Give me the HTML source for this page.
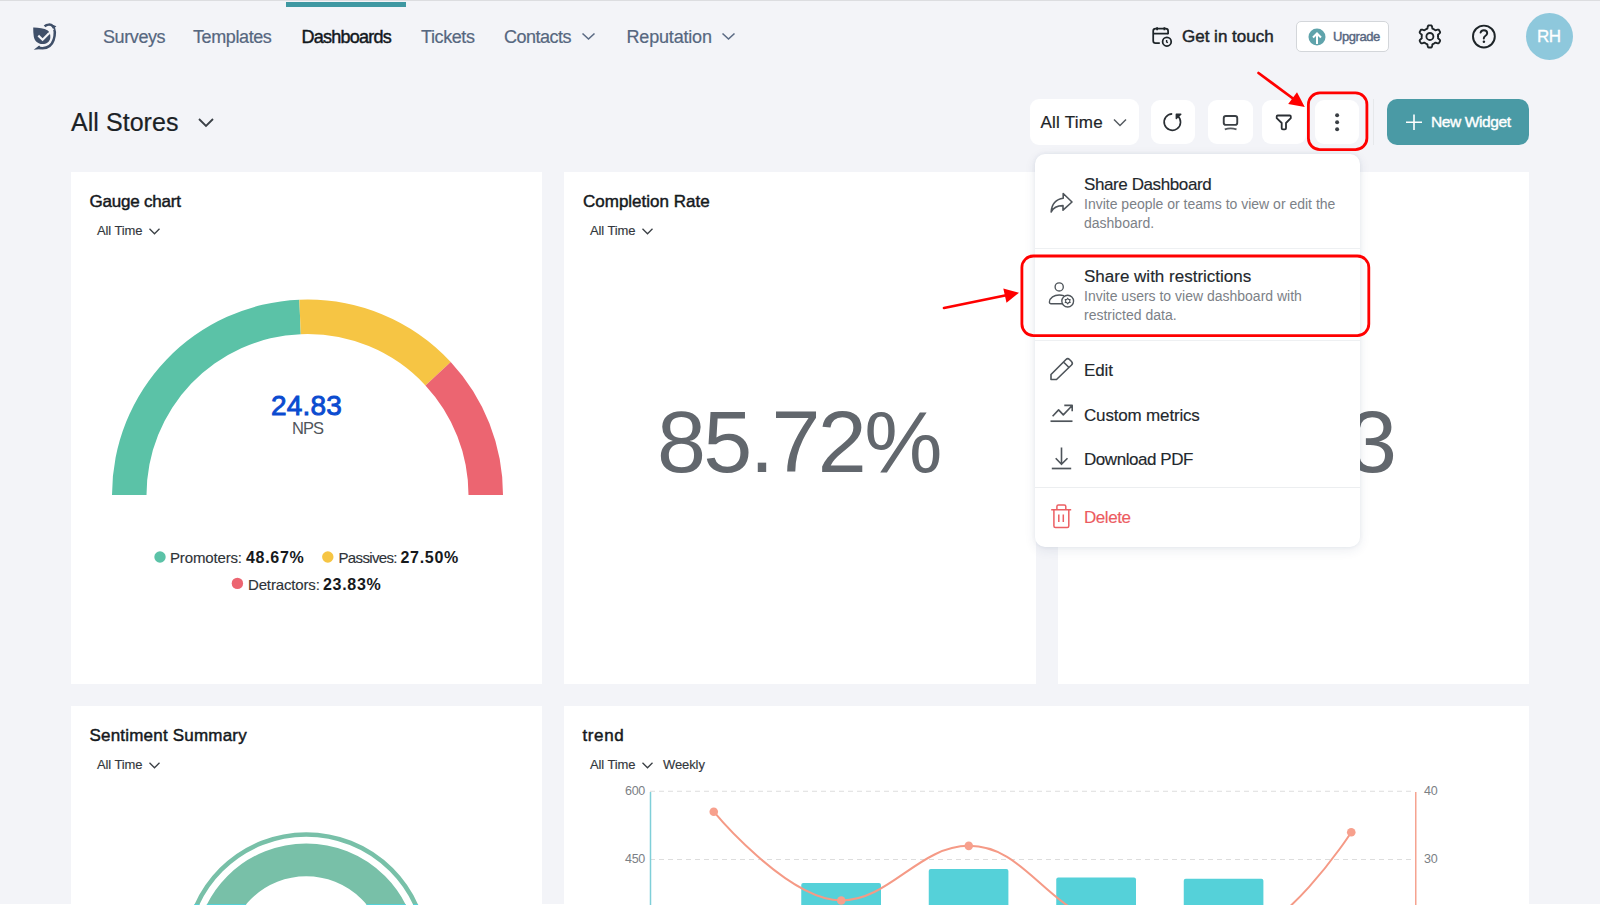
<!DOCTYPE html>
<html>
<head>
<meta charset="utf-8">
<style>
*{box-sizing:border-box;margin:0;padding:0}
html,body{width:1600px;height:905px;overflow:hidden}
body{background:#f3f4f8;font-family:"Liberation Sans",sans-serif;position:relative;color:#1d2428}
.a{position:absolute;white-space:nowrap}
.topline{position:absolute;left:0;top:0;width:1600px;height:1px;background:#dcdde0}
.nav{font-size:18px;line-height:20px;color:#56677f;letter-spacing:-0.4px;-webkit-text-stroke:0.2px #56677f}
.card{position:absolute;background:#fff}
.ctitle{font-size:17px;line-height:20px;font-weight:400;color:#15191d;letter-spacing:0px;-webkit-text-stroke:0.45px #15191d}
.ctime{font-size:13px;line-height:16px;color:#33383d;letter-spacing:-0.1px;-webkit-text-stroke:0.15px #33383d}
.btn{position:absolute;background:#fff;border-radius:9px}
.leg{font-size:15px;line-height:18px;color:#2e3338;-webkit-text-stroke:0.15px #2e3338}
.legv{font-size:16px;line-height:20px;font-weight:700;color:#16191c;letter-spacing:0.7px}
.mi{font-size:17px;line-height:20px;color:#23282d;letter-spacing:-0.45px;-webkit-text-stroke:0.15px #23282d}
.ms{font-size:14px;line-height:19px;color:#7c8187;letter-spacing:-0.2px}
</style>
</head>
<body>
<div class="topline"></div>
<div class="a" style="left:286px;top:2px;width:120px;height:5px;background:#3f98a2"></div>

<!-- logo -->
<svg class="a" style="left:0;top:0" width="70" height="60" viewBox="0 0 70 60">
  <path d="M33.2 27.6 C37.5 27.5 44 28.2 47.8 30.6 C50 32.4 50.6 35.2 50.3 38 C49.7 42 46.2 44.2 42.4 44.1 C38 44 34.6 41 33.8 36.8 C33.3 34 33.2 30.8 33.2 27.6 Z" fill="#3f4f69"/>
  <path d="M44.6 26.4 C46.8 24.2 50.8 23.9 52.8 26.3 C55 29 55.1 35 53.6 40 C51.9 45 47.5 48.1 42.5 48.2 C40.5 48.2 39 47.9 37.8 47.4" stroke="#3f4f69" stroke-width="2.5" fill="none"/>
  <path d="M39.2 45.6 L33.7 49.8 L42 48.9 Z" fill="#3f4f69"/>
  <path d="M52 24.6 L56.4 26.2 L53.6 28.8 Z" fill="#3f4f69"/>
  <path d="M38.3 35.6 L42.6 39.7 L49 33.3" stroke="#f3f4f8" stroke-width="2.2" fill="none"/>
  <path d="M48.2 34.1 L53.5 28.8" stroke="#f3f4f8" stroke-width="1.6" fill="none"/>
</svg>

<div class="a nav" style="left:103px;top:27px">Surveys</div>
<div class="a nav" style="left:193px;top:27px">Templates</div>
<div class="a nav" style="left:301.5px;top:27px;color:#12181d;letter-spacing:-0.75px;-webkit-text-stroke:0.45px #12181d">Dashboards</div>
<div class="a nav" style="left:421px;top:27px">Tickets</div>
<div class="a nav" style="left:504px;top:27px;letter-spacing:-0.5px">Contacts</div>
<svg class="a" style="left:581px;top:31px" width="15" height="10" viewBox="0 0 15 10"><path d="M1.5 2.5 L7.5 8 L13.5 2.5" stroke="#5b6b84" stroke-width="1.6" fill="none"/></svg>
<div class="a nav" style="left:626.5px;top:27px;letter-spacing:-0.18px">Reputation</div>
<svg class="a" style="left:721px;top:31px" width="15" height="10" viewBox="0 0 15 10"><path d="M1.5 2.5 L7.5 8 L13.5 2.5" stroke="#5b6b84" stroke-width="1.6" fill="none"/></svg>

<!-- right header -->
<svg class="a" style="left:1146px;top:22px" width="32" height="30" viewBox="1146 22 32 30">
  <path d="M1159.8 43.2 H1155.6 a2.4 2.4 0 0 1 -2.4 -2.4 V31 a2.4 2.4 0 0 1 2.4 -2.4 H1165.7 a2.4 2.4 0 0 1 2.4 2.4 V34.2" stroke="#1d2428" stroke-width="1.75" fill="none"/>
  <path d="M1153.2 33.6 H1168.1 M1157.1 27.3 V30.3 M1164.4 27.3 V30.3" stroke="#1d2428" stroke-width="1.75" fill="none"/>
  <circle cx="1166.9" cy="41.7" r="4.3" stroke="#1d2428" stroke-width="1.75" fill="none"/>
  <path d="M1166.6 40 V41.9 L1167.8 42.8" stroke="#1d2428" stroke-width="1.4" fill="none"/>
</svg>
<div class="a" style="left:1182px;top:27px;font-size:17px;line-height:20px;color:#1d2428;letter-spacing:0px;-webkit-text-stroke:0.45px #1d2428">Get in touch</div>
<div class="a" style="left:1296px;top:21px;width:93px;height:31px;border:1px solid #d3d6da;border-radius:5px;background:#fff"></div>
<svg class="a" style="left:1308px;top:28px" width="18" height="18" viewBox="0 0 18 18">
  <circle cx="9" cy="9" r="8.5" fill="#5fa3ab"/>
  <path d="M9 16 V6 M5 9.5 L9 5.5 L13 9.5" stroke="#fff" stroke-width="2" fill="none"/>
</svg>
<div class="a" style="left:1333px;top:29px;font-size:13px;line-height:16px;color:#56667f;letter-spacing:-0.45px;-webkit-text-stroke:0.4px #56667f">Upgrade</div>
<svg class="a" style="left:1410px;top:16px" width="40" height="42" viewBox="1410 16 40 42">
  <path d="M1429.90 25.35 L1430.19 25.35 L1430.48 25.37 L1430.77 25.38 L1431.06 25.41 L1431.34 25.49 L1431.60 25.71 L1431.82 26.07 L1432.00 26.56 L1432.14 27.13 L1432.24 27.70 L1432.34 28.20 L1432.47 28.55 L1432.64 28.72 L1432.84 28.79 L1433.04 28.87 L1433.24 28.96 L1433.43 29.05 L1433.62 29.14 L1433.81 29.24 L1434.00 29.35 L1434.18 29.46 L1434.37 29.57 L1434.54 29.69 L1434.72 29.82 L1434.89 29.94 L1435.06 30.08 L1435.23 30.21 L1435.46 30.28 L1435.82 30.21 L1436.30 30.05 L1436.85 29.85 L1437.41 29.69 L1437.93 29.59 L1438.35 29.60 L1438.67 29.72 L1438.88 29.93 L1439.05 30.16 L1439.21 30.40 L1439.36 30.65 L1439.51 30.90 L1439.65 31.15 L1439.79 31.41 L1439.92 31.67 L1440.04 31.94 L1440.11 32.22 L1440.06 32.55 L1439.85 32.93 L1439.51 33.33 L1439.09 33.73 L1438.65 34.11 L1438.27 34.44 L1438.02 34.72 L1437.96 34.96 L1438.00 35.17 L1438.03 35.38 L1438.06 35.59 L1438.07 35.81 L1438.09 36.02 L1438.10 36.24 L1438.10 36.45 L1438.10 36.66 L1438.09 36.88 L1438.07 37.09 L1438.06 37.31 L1438.03 37.52 L1438.00 37.73 L1437.96 37.94 L1438.02 38.18 L1438.27 38.46 L1438.65 38.79 L1439.09 39.17 L1439.51 39.57 L1439.85 39.97 L1440.06 40.35 L1440.11 40.68 L1440.04 40.96 L1439.92 41.23 L1439.79 41.49 L1439.65 41.75 L1439.51 42.00 L1439.36 42.25 L1439.21 42.50 L1439.05 42.74 L1438.88 42.97 L1438.67 43.18 L1438.35 43.30 L1437.93 43.31 L1437.41 43.21 L1436.85 43.05 L1436.30 42.85 L1435.82 42.69 L1435.46 42.62 L1435.23 42.69 L1435.06 42.82 L1434.89 42.96 L1434.72 43.08 L1434.54 43.21 L1434.37 43.33 L1434.18 43.44 L1434.00 43.55 L1433.81 43.66 L1433.62 43.76 L1433.43 43.85 L1433.24 43.94 L1433.04 44.03 L1432.84 44.11 L1432.64 44.18 L1432.47 44.35 L1432.34 44.70 L1432.24 45.20 L1432.14 45.77 L1432.00 46.34 L1431.82 46.83 L1431.60 47.19 L1431.34 47.41 L1431.06 47.49 L1430.77 47.52 L1430.48 47.53 L1430.19 47.55 L1429.90 47.55 L1429.61 47.55 L1429.32 47.53 L1429.03 47.52 L1428.74 47.49 L1428.46 47.41 L1428.20 47.19 L1427.98 46.83 L1427.80 46.34 L1427.66 45.77 L1427.56 45.20 L1427.46 44.70 L1427.33 44.35 L1427.16 44.18 L1426.96 44.11 L1426.76 44.03 L1426.56 43.94 L1426.37 43.85 L1426.18 43.76 L1425.99 43.66 L1425.80 43.55 L1425.62 43.44 L1425.43 43.33 L1425.26 43.21 L1425.08 43.08 L1424.91 42.96 L1424.74 42.82 L1424.57 42.69 L1424.34 42.62 L1423.98 42.69 L1423.50 42.85 L1422.95 43.05 L1422.39 43.21 L1421.87 43.31 L1421.45 43.30 L1421.13 43.18 L1420.92 42.97 L1420.75 42.74 L1420.59 42.50 L1420.44 42.25 L1420.29 42.00 L1420.15 41.75 L1420.01 41.49 L1419.88 41.23 L1419.76 40.96 L1419.69 40.68 L1419.74 40.35 L1419.95 39.97 L1420.29 39.57 L1420.71 39.17 L1421.15 38.79 L1421.53 38.46 L1421.78 38.18 L1421.84 37.94 L1421.80 37.73 L1421.77 37.52 L1421.74 37.31 L1421.73 37.09 L1421.71 36.88 L1421.70 36.66 L1421.70 36.45 L1421.70 36.24 L1421.71 36.02 L1421.73 35.81 L1421.74 35.59 L1421.77 35.38 L1421.80 35.17 L1421.84 34.96 L1421.78 34.72 L1421.53 34.44 L1421.15 34.11 L1420.71 33.73 L1420.29 33.33 L1419.95 32.93 L1419.74 32.55 L1419.69 32.22 L1419.76 31.94 L1419.88 31.67 L1420.01 31.41 L1420.15 31.15 L1420.29 30.90 L1420.44 30.65 L1420.59 30.40 L1420.75 30.16 L1420.92 29.93 L1421.13 29.72 L1421.45 29.60 L1421.87 29.59 L1422.39 29.69 L1422.95 29.85 L1423.50 30.05 L1423.98 30.21 L1424.34 30.28 L1424.57 30.21 L1424.74 30.08 L1424.91 29.94 L1425.08 29.82 L1425.26 29.69 L1425.43 29.57 L1425.62 29.46 L1425.80 29.35 L1425.99 29.24 L1426.18 29.14 L1426.37 29.05 L1426.56 28.96 L1426.76 28.87 L1426.96 28.79 L1427.16 28.72 L1427.33 28.55 L1427.46 28.20 L1427.56 27.70 L1427.66 27.13 L1427.80 26.56 L1427.98 26.07 L1428.20 25.71 L1428.46 25.49 L1428.74 25.41 L1429.03 25.38 L1429.32 25.37 L1429.61 25.35Z" stroke="#1d2428" stroke-width="1.9" fill="none" stroke-linejoin="round"/>
  <circle cx="1429.9" cy="36.45" r="3.5" stroke="#1d2428" stroke-width="1.85" fill="none"/>
</svg>
<svg class="a" style="left:1466px;top:20px" width="36" height="34" viewBox="1466 20 36 34">
  <circle cx="1483.9" cy="36.5" r="10.9" stroke="#1d2428" stroke-width="1.95" fill="none"/>
  <path d="M1480.6 32.6 C1481 30.9 1482.3 30.2 1483.8 30.2 C1485.8 30.2 1487.2 31.5 1487.2 33.2 C1487.2 34.8 1486.1 35.5 1485 36.2 C1484.2 36.7 1483.8 37.3 1483.8 38.6" stroke="#1d2428" stroke-width="1.95" fill="none" stroke-linecap="round"/>
  <circle cx="1483.9" cy="41.7" r="1.25" fill="#1d2428"/>
</svg>
<div class="a" style="left:1526px;top:13px;width:47px;height:47px;border-radius:50%;background:#8ec8dc"></div>
<div class="a" style="left:1537px;top:27px;font-size:17px;line-height:20px;color:#fff;letter-spacing:-0.6px;-webkit-text-stroke:0.3px #fff">RH</div>

<!-- title -->
<div class="a" style="left:71px;top:108.4px;font-size:25px;line-height:28px;color:#1b2226;letter-spacing:0.05px;-webkit-text-stroke:0.2px #1b2226">All Stores</div>
<svg class="a" style="left:197px;top:116px" width="18" height="12" viewBox="0 0 18 12"><path d="M2 3 L9 10 L16 3" stroke="#3a4046" stroke-width="1.8" fill="none"/></svg>

<!-- toolbar -->
<div class="btn" style="left:1030px;top:99px;width:109px;height:46px"></div>
<div class="a" style="left:1040.5px;top:113px;font-size:17px;line-height:20px;color:#1d2428;letter-spacing:0.25px;-webkit-text-stroke:0.2px #1d2428">All Time</div>
<svg class="a" style="left:1112px;top:117px" width="16" height="11" viewBox="0 0 16 11"><path d="M2 2.5 L8 8.5 L14 2.5" stroke="#555b61" stroke-width="1.5" fill="none"/></svg>
<div class="btn" style="left:1151px;top:100px;width:44px;height:44px"></div>
<svg class="a" style="left:1150px;top:100px" width="45" height="44" viewBox="1150 100 45 44">
  <path d="M1172.2 113.9 A8.2 8.2 0 1 0 1177.6 115.8" stroke="#2a2f34" stroke-width="1.65" fill="none"/>
  <path d="M1176.3 118.6 V114.2 H1180.8 Z" stroke="#2a2f34" stroke-width="1.4" fill="#2a2f34" stroke-linejoin="round"/>
</svg>
<div class="btn" style="left:1208px;top:100px;width:45px;height:44px"></div>
<svg class="a" style="left:1208px;top:100px" width="45" height="44" viewBox="1208 100 45 44">
  <rect x="1223.75" y="115.95" width="13.5" height="8.9" rx="2.2" stroke="#3a3f44" stroke-width="1.9" fill="none"/>
  <path d="M1224.8 129.4 C1228.5 128 1232.5 128 1236.5 129.4" stroke="#55595e" stroke-width="1.7" fill="none"/>
</svg>
<div class="btn" style="left:1262px;top:100px;width:44px;height:44px"></div>
<svg class="a" style="left:1266px;top:106px" width="34" height="32" viewBox="1266 106 34 32">
  <path d="M1277.7 115.5 H1289.8 a1 1 0 0 1 1 1 V118.2 L1286 123 V128.2 a1.2 1.2 0 0 1 -1.2 1.2 H1282.9 a1.2 1.2 0 0 1 -1.2 -1.2 V123 L1276.7 118.2 V116.5 a1 1 0 0 1 1 -1 Z" stroke="#2a2f34" stroke-width="1.8" fill="none" stroke-linejoin="round"/>
</svg>
<div class="btn" style="left:1315px;top:100px;width:44px;height:44px"></div>
<svg class="a" style="left:1333px;top:112px" width="9" height="20" viewBox="0 0 9 20">
  <circle cx="4.1" cy="3.3" r="2" fill="#3a3f44"/><circle cx="4.1" cy="10.3" r="2" fill="#3a3f44"/><circle cx="4.1" cy="17.2" r="2" fill="#3a3f44"/>
</svg>
<div class="a" style="left:1373px;top:99px;width:1px;height:46px;background:#e6e8eb"></div>
<div class="a" style="left:1387px;top:99px;width:142px;height:46px;border-radius:10px;background:#4a9aa5"></div>
<svg class="a" style="left:1405px;top:113px" width="18" height="18" viewBox="0 0 18 18"><path d="M9 1.5 V17 M1 9.2 H17" stroke="#fff" stroke-width="1.6"/></svg>
<div class="a" style="left:1431px;top:113px;font-size:15.5px;line-height:18px;color:#fff;letter-spacing:-0.4px;-webkit-text-stroke:0.4px #fff">New Widget</div>

<!-- row 1 cards -->
<div class="card" style="left:71px;top:172px;width:471px;height:512px"></div>
<div class="card" style="left:564px;top:172px;width:472px;height:512px"></div>
<div class="card" style="left:1058px;top:172px;width:471px;height:512px"></div>
<!-- row 2 cards -->
<div class="card" style="left:71px;top:706px;width:471px;height:199px"></div>
<div class="card" style="left:564px;top:706px;width:965px;height:199px"></div>

<!-- card 1 gauge -->
<div class="a ctitle" style="left:89.5px;top:192px;letter-spacing:-0.2px">Gauge chart</div>
<div class="a ctime" style="left:97px;top:223px">All Time</div>
<svg class="a" style="left:148px;top:227px" width="13" height="9" viewBox="0 0 13 9"><path d="M1.5 1.8 L6.5 6.8 L11.5 1.8" stroke="#3a3f44" stroke-width="1.3" fill="none"/></svg>
<div class="a ctitle" style="left:583px;top:192px">Completion Rate</div>
<div class="a ctime" style="left:590px;top:223px">All Time</div>
<svg class="a" style="left:641px;top:227px" width="13" height="9" viewBox="0 0 13 9"><path d="M1.5 1.8 L6.5 6.8 L11.5 1.8" stroke="#3a3f44" stroke-width="1.3" fill="none"/></svg>

<svg class="a" style="left:0;top:0" width="1600" height="905" viewBox="0 0 1600 905">
<path d="M112.00 495.00 A195.5 195.5 0 0 1 299.33 299.67 L300.77 334.14 A161 161 0 0 0 146.50 495.00Z" fill="#5bc2a7"/>
<path d="M299.33 299.67 A195.5 195.5 0 0 1 450.73 361.93 L425.45 385.42 A161 161 0 0 0 300.77 334.14Z" fill="#f6c544"/>
<path d="M450.73 361.93 A195.5 195.5 0 0 1 503.00 495.00 L468.50 495.00 A161 161 0 0 0 425.45 385.42Z" fill="#ec6571"/>
<circle cx="160" cy="557" r="5.7" fill="#5bc2a7"/>
<circle cx="327.8" cy="557" r="5.7" fill="#f6c544"/>
<circle cx="237.4" cy="583.4" r="5.7" fill="#ec6571"/>
<!-- sentiment donut -->
<circle cx="306.25" cy="954.75" r="120.3" stroke="#78c0a8" stroke-width="4.5" fill="none"/>
<circle cx="306.25" cy="954.75" r="94.9" stroke="#78c0a8" stroke-width="32.9" fill="none"/>
<!-- trend chart -->
<path d="M650 791.25 H1415 M650 859.5 H1415" stroke="#dddddd" stroke-width="1" stroke-dasharray="5 4"/>
<path d="M650.5 792 V905" stroke="#7fcfd8" stroke-width="1.5"/>
<path d="M1415.75 792 V905" stroke="#f5a390" stroke-width="1.5"/>
<path d="M801.25 905 V885 a2 2 0 0 1 2 -2 H879 a2 2 0 0 1 2 2 V905Z" fill="#55d1d9"/>
<path d="M928.75 905 V871 a2 2 0 0 1 2 -2 H1006.4 a2 2 0 0 1 2 2 V905Z" fill="#55d1d9"/>
<path d="M1056.25 905 V879.5 a2 2 0 0 1 2 -2 H1134 a2 2 0 0 1 2 2 V905Z" fill="#55d1d9"/>
<path d="M1183.75 905 V880.75 a2 2 0 0 1 2 -2 H1261.4 a2 2 0 0 1 2 2 V905Z" fill="#55d1d9"/>
<path id="trendline" d="M713.75 811.73 C713.75 811.73 787.36 900.45 841.25 900.45 C889.36 900.45 919.40 845.85 968.75 845.85 C1021.40 845.85 1041.78 900.52 1096.25 920.92 C1143.78 938.74 1179.40 941.40 1223.75 941.40 C1281.40 941.40 1351.25 832.20 1351.25 832.20" stroke="#f59a86" stroke-width="2" fill="none"/>
<circle cx="713.75" cy="811.73" r="4.3" fill="#f7a08d"/>
<circle cx="841.25" cy="900.45" r="4.3" fill="#f7a08d"/>
<circle cx="968.75" cy="845.85" r="4.3" fill="#f7a08d"/>
<circle cx="1351.25" cy="832.2" r="4.3" fill="#f7a08d"/>
</svg>

<div class="a" style="left:271px;top:390px;font-size:28px;line-height:32px;font-weight:400;color:#0b4bd0;letter-spacing:0.2px;-webkit-text-stroke:0.9px #0b4bd0">24.83</div>
<div class="a" style="left:292px;top:419px;font-size:16.5px;line-height:18px;color:#50555b;letter-spacing:-1px">NPS</div>

<div class="a leg" style="left:170px;top:549px;letter-spacing:-0.15px">Promoters:</div>
<div class="a legv" style="left:246px;top:548px">48.67%</div>
<div class="a leg" style="left:338.5px;top:549px;letter-spacing:-0.65px">Passives:</div>
<div class="a legv" style="left:400.5px;top:548px">27.50%</div>
<div class="a leg" style="left:248px;top:576px;letter-spacing:-0.15px">Detractors:</div>
<div class="a legv" style="left:323px;top:575px">23.83%</div>
<div class="a" style="left:657px;top:392px;font-size:88px;line-height:100px;color:#62676d;letter-spacing:-2.6px">85.72%</div>
<div class="a" style="left:1348px;top:392px;font-size:88px;line-height:100px;color:#62676d">3</div>

<div class="a ctitle" style="left:89.5px;top:726px;letter-spacing:0.2px">Sentiment Summary</div>
<div class="a ctime" style="left:97px;top:757px">All Time</div>
<svg class="a" style="left:148px;top:761px" width="13" height="9" viewBox="0 0 13 9"><path d="M1.5 1.8 L6.5 6.8 L11.5 1.8" stroke="#3a3f44" stroke-width="1.3" fill="none"/></svg>
<div class="a ctitle" style="left:582.5px;top:726px;letter-spacing:0.6px">trend</div>
<div class="a ctime" style="left:590px;top:757px">All Time</div>
<svg class="a" style="left:641px;top:761px" width="13" height="9" viewBox="0 0 13 9"><path d="M1.5 1.8 L6.5 6.8 L11.5 1.8" stroke="#3a3f44" stroke-width="1.3" fill="none"/></svg>
<div class="a ctime" style="left:663px;top:757px">Weekly</div>
<div class="a" style="left:612px;top:784px;width:33px;text-align:right;font-size:12.5px;line-height:14px;color:#7b8085;letter-spacing:-0.3px">600</div>
<div class="a" style="left:612px;top:852px;width:33px;text-align:right;font-size:12.5px;line-height:14px;color:#7b8085;letter-spacing:-0.3px">450</div>
<div class="a" style="left:1424px;top:784px;font-size:12.5px;line-height:14px;color:#7b8085;letter-spacing:-0.3px">40</div>
<div class="a" style="left:1424px;top:852px;font-size:12.5px;line-height:14px;color:#7b8085;letter-spacing:-0.3px">30</div>


<!-- dropdown -->
<div class="a" style="left:1035px;top:154px;width:325px;height:393px;background:#fff;border-radius:10px;box-shadow:0 3px 12px rgba(30,50,100,0.09),0 0 4px rgba(30,50,100,0.07)"></div>
<div class="a" style="left:1035px;top:248px;width:325px;height:1px;background:#eef0f2"></div>
<div class="a" style="left:1035px;top:340px;width:325px;height:1px;background:#eef0f2"></div>
<div class="a" style="left:1035px;top:487px;width:325px;height:1px;background:#eceef0"></div>

<svg class="a" style="left:1040px;top:180px" width="40" height="40" viewBox="1040 180 40 40">
  <path d="M1063.2 193.5 L1072 202 L1063 210.2 V205.6 C1057 205.6 1053 208 1051.2 212 C1051.5 204.5 1056 199 1063.2 198.3 Z" stroke="#4e545a" stroke-width="1.6" fill="none" stroke-linejoin="round"/>
</svg>
<div class="a mi" style="left:1084px;top:174.5px;letter-spacing:-0.4px">Share Dashboard</div>
<div class="a ms" style="left:1084px;top:195px;letter-spacing:0px">Invite people or teams to view or edit the</div>
<div class="a ms" style="left:1084px;top:214px;letter-spacing:0px">dashboard.</div>

<svg class="a" style="left:1040px;top:275px" width="40" height="40" viewBox="1040 275 40 40">
  <circle cx="1059.2" cy="286.9" r="4.1" stroke="#4e545a" stroke-width="1.35" fill="none"/>
  <path d="M1062.5 303.7 H1051 a1.6 1.6 0 0 1 -1.6 -1.7 C1049.8 297.6 1054 295 1059.2 295 C1061 295 1062.6 295.3 1063.6 295.6" stroke="#4e545a" stroke-width="1.35" fill="none" stroke-linecap="round"/>
  <circle cx="1067.7" cy="301.1" r="5.9" stroke="#4e545a" stroke-width="1.35" fill="none"/>
  <path d="M1067.70 298.20 L1066.80 299.54 L1065.19 299.65 L1065.90 301.10 L1065.19 302.55 L1066.80 302.66 L1067.70 304.00 L1068.60 302.66 L1070.21 302.55 L1069.50 301.10 L1070.21 299.65 L1068.60 299.54Z" stroke="#4e545a" stroke-width="1.1" fill="none" stroke-linejoin="round"/>
</svg>
<div class="a mi" style="left:1084px;top:267px;letter-spacing:0px">Share with restrictions</div>
<div class="a ms" style="left:1084px;top:287px;letter-spacing:0px">Invite users to view dashboard with</div>
<div class="a ms" style="left:1084px;top:306px;letter-spacing:0px">restricted data.</div>

<svg class="a" style="left:1040px;top:350px" width="40" height="40" viewBox="1040 350 40 40">
  <path d="M1051 379.5 V374.5 L1066 359.5 a2.5 2.5 0 0 1 3.5 0 L1071.5 361.5 a2.5 2.5 0 0 1 0 3.5 L1056.5 379.5 Z M1063.5 362 L1069 367.5" stroke="#4e545a" stroke-width="1.6" fill="none" stroke-linejoin="round"/>
</svg>
<div class="a mi" style="left:1084px;top:361px;letter-spacing:-0.1px">Edit</div>

<svg class="a" style="left:1040px;top:398px" width="40" height="30" viewBox="1040 398 40 30">
  <path d="M1050.5 421.2 H1072.5" stroke="#4e545a" stroke-width="1.7"/>
  <path d="M1052.6 416.3 L1058.6 409.9 L1063.3 414.9 L1072 405.7 M1064.3 405.4 H1072.2 V411.3" stroke="#4e545a" stroke-width="1.6" fill="none" stroke-linejoin="round"/>
</svg>
<div class="a mi" style="left:1084px;top:405.5px;letter-spacing:-0.17px">Custom metrics</div>

<svg class="a" style="left:1040px;top:442px" width="40" height="32" viewBox="1040 442 40 32">
  <path d="M1061.5 447.5 V464.5 M1055.7 458.3 L1061.5 464.3 L1067.5 458.3" stroke="#4e545a" stroke-width="1.6" fill="none" stroke-linejoin="round"/>
  <path d="M1051.8 468.5 H1071.2" stroke="#4e545a" stroke-width="1.7"/>
</svg>
<div class="a mi" style="left:1084px;top:450px">Download PDF</div>

<svg class="a" style="left:1040px;top:500px" width="40" height="32" viewBox="1040 500 40 32">
  <path d="M1051.2 509.7 H1071.2 M1053.9 509.7 V526 a1.5 1.5 0 0 0 1.5 1.5 H1067.3 a1.5 1.5 0 0 0 1.5 -1.5 V509.7 M1056.9 509.7 V506.5 a1.5 1.5 0 0 1 1.5 -1.5 H1064.3 a1.5 1.5 0 0 1 1.5 1.5 V509.7 M1058.8 514.6 V522 M1063.3 514.6 V522" stroke="#ec5f63" stroke-width="1.5" fill="none"/>
</svg>
<div class="a mi" style="left:1084px;top:508px;color:#ec5b5f;-webkit-text-stroke:0.15px #ec5b5f">Delete</div>

<!-- annotations -->
<svg class="a" style="left:0;top:0" width="1600" height="905" viewBox="0 0 1600 905">
  <rect x="1308.4" y="92.9" width="58.5" height="56.8" rx="11.5" stroke="#ff0000" stroke-width="2.8" fill="none"/>
  <rect x="1021.9" y="256" width="346.9" height="79.6" rx="11.5" stroke="#ff0000" stroke-width="2.8" fill="none"/>
  <path d="M1258.5 73 L1293 98.5" stroke="#ff0000" stroke-width="2.7" stroke-linecap="round"/>
  <path d="M1297 92.2 L1288.2 104.1 L1304.8 107 Z" fill="#ff0000"/>
  <path d="M944 308 L1005 295.5" stroke="#ff0000" stroke-width="2.7" stroke-linecap="round"/>
  <path d="M1003.3 288.5 L1006.5 302.8 L1019 292.8 Z" fill="#ff0000"/>
</svg>

<svg class="a" style="left:150px;top:904px" width="320" height="1" viewBox="150 904 320 1">
  <circle cx="306.25" cy="954.75" r="120.3" stroke="#55d1d9" stroke-width="4.5" fill="none"/>
  <circle cx="306.25" cy="954.75" r="94.9" stroke="#55d1d9" stroke-width="32.9" fill="none"/>
</svg>
<div class="a" style="left:0;top:904px;width:71px;height:1px;background:#fff"></div>
<div class="a" style="left:542px;top:904px;width:22px;height:1px;background:#fff"></div>
<div class="a" style="left:1529px;top:904px;width:71px;height:1px;background:#fff"></div>

</body>
</html>
